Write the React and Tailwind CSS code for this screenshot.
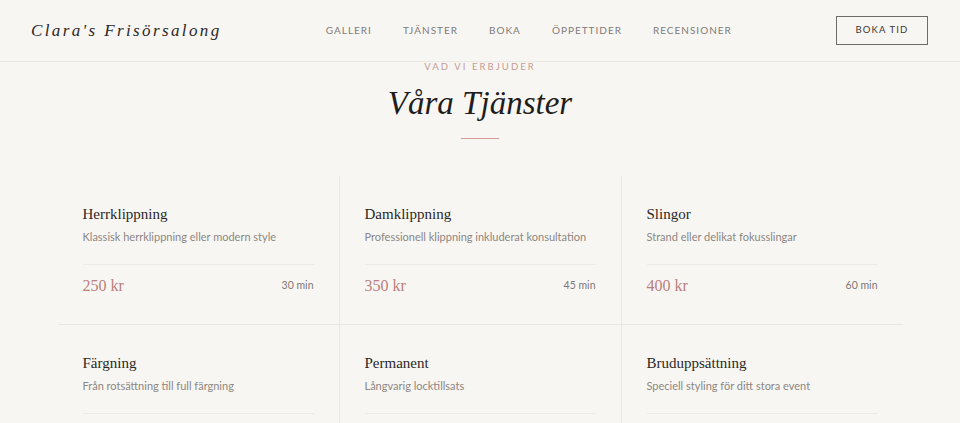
const tjanster = [
  { namn: "Herrklippning", text: "Klassisk herrklippning eller modern style", pris: "250 kr", tid: "30 min" },
  { namn: "Damklippning", text: "Professionell klippning inkluderat konsultation", pris: "350 kr", tid: "45 min" },
  { namn: "Slingor", text: "Strand eller delikat fokusslingar", pris: "400 kr", tid: "60 min" },
  { namn: "Färgning", text: "Från rotsättning till full färgning", pris: "550 kr", tid: "90 min" },
  { namn: "Permanent", text: "Långvarig locktillsats", pris: "600 kr", tid: "120 min" },
  { namn: "Bruduppsättning", text: "Speciell styling för ditt stora event", pris: "800 kr", tid: "90 min" },
];

const meny = ["Galleri", "Tjänster", "Boka", "Öppettider", "Recensioner"];

const serif = "font-['Liberation_Serif','DejaVu_Serif',serif]";
const sans = "font-['Lato','Noto_Sans',sans-serif]";

function Tjanst({ namn, text, pris, tid }) {
  return (
    <div className="bg-[#f8f6f3] px-[25px] pt-[28px] pb-[28px]">
      <h3 className={`${serif} text-[15px] leading-[20px] text-[#2a2826]`}>{namn}</h3>
      <p className={`${sans} mt-[4px] whitespace-nowrap text-[11px] leading-[18px] text-[#8c8782]`}>{text}</p>
      <div className="mt-[18px] flex items-center justify-between border-t border-[#eeeae5] pt-[11px]">
        <span className={`${serif} text-[16px] leading-[20px] text-[#b9807b]`}>{pris}</span>
        <span className={`${sans} text-[10.5px] text-[#7d7873]`}>{tid}</span>
      </div>
    </div>
  );
}

export default function App() {
  return (
    <main className="h-[423px] overflow-hidden bg-[#f8f6f3]">
      <header className="flex h-[62px] items-center justify-between border-b border-[#ece8e3] pl-[31px] pr-[32px]">
        <span className={`${serif} text-[17px] italic tracking-[0.14em] text-[#2a2826]`}>Clara's Frisörsalong</span>
        <nav className={`${sans} flex gap-[31px] text-[10px] uppercase tracking-[0.1em] text-[#807b76]`}>
          {meny.map((punkt) => (
            <a key={punkt}>{punkt}</a>
          ))}
        </nav>
        <button className={`${sans} h-[29px] w-[92px] border border-[#6f6b67] text-[9.5px] uppercase tracking-[0.12em] text-[#3b3835]`}>
          Boka tid
        </button>
      </header>

      <section className="flex flex-col items-center">
        <p className={`${sans} mt-[-1px] text-[9.5px] leading-[12px] uppercase tracking-[0.22em] text-[#c49b95]`}>Vad vi erbjuder</p>
        <h2 className={`${serif} mt-[10px] text-[33px] leading-[40px] italic text-[#1f1d1c]`}>Våra Tjänster</h2>
        <div className="mt-[15px] h-px w-[38px] bg-[#d49c98]" />

        <div className="mt-[37px] grid w-[845px] grid-cols-3 gap-px bg-[#ebe6e0]">
          {tjanster.map((tjanst) => (
            <Tjanst key={tjanst.namn} {...tjanst} />
          ))}
        </div>
      </section>
    </main>
  );
}
